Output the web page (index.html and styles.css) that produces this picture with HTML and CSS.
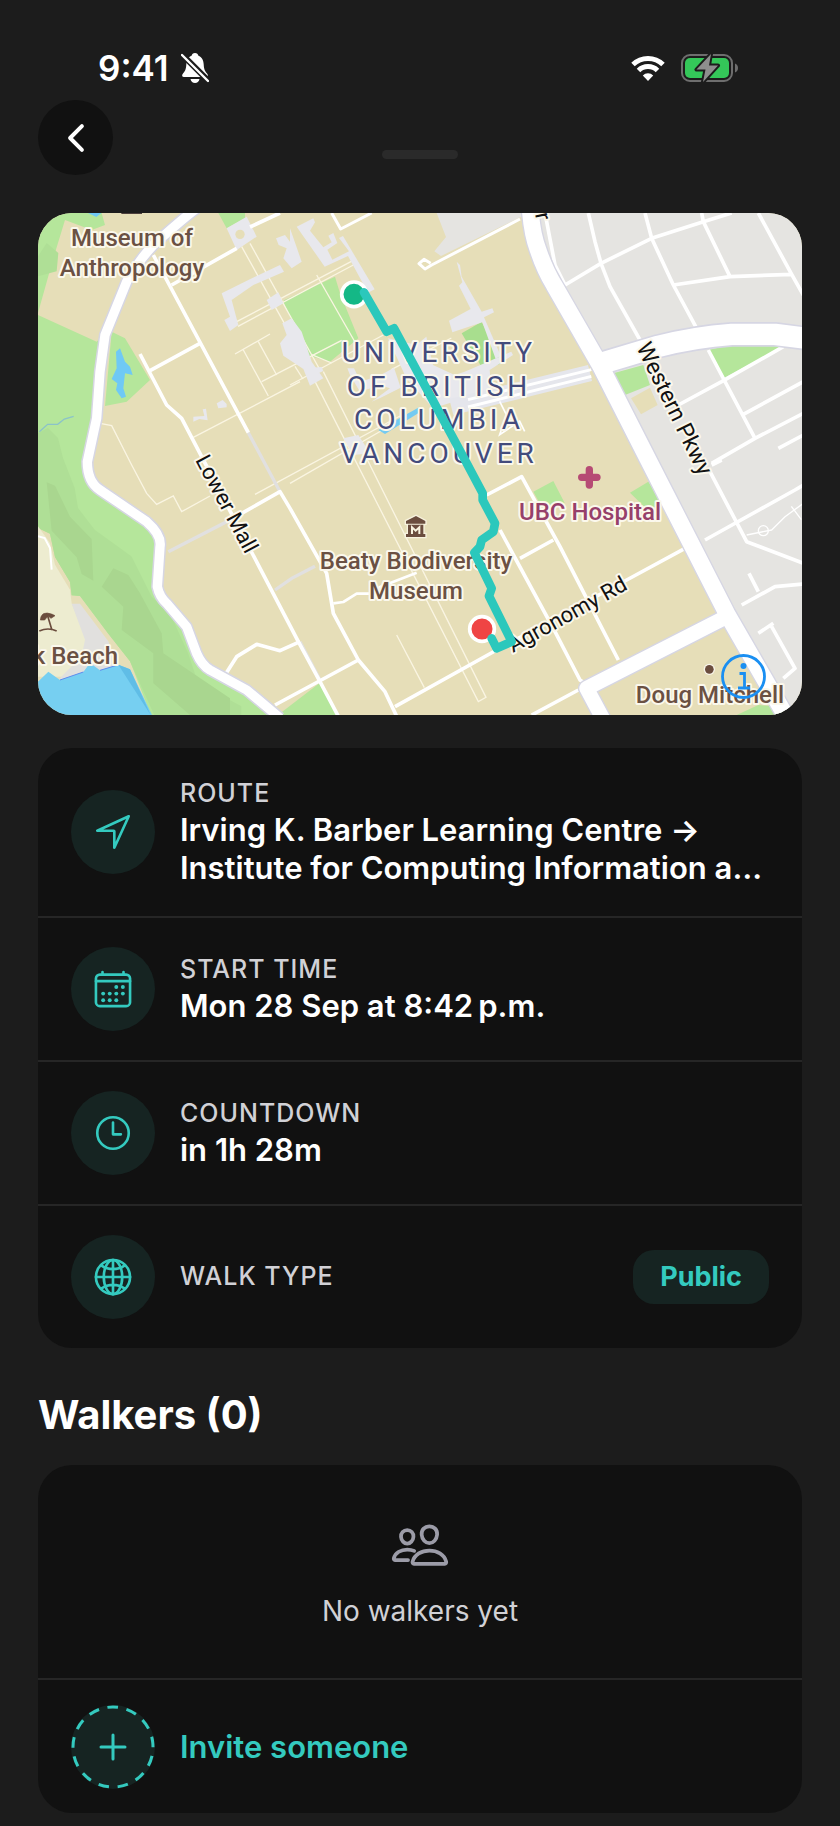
FILE: index.html
```html
<!DOCTYPE html>
<html lang="en">
<head>
<meta charset="UTF-8" />
<meta name="viewport" content="width=device-width, initial-scale=1" />
<title>Walk details</title>
<link rel="stylesheet" href="styles.css">
</head>
<body>

<div class="status-bar">
  <div class="status-left">
    <span class="time">9:41</span>
    <svg class="bell" viewBox="0 0 28 30">
      <path d="M14 0c2 0 3 1 3.200 2.500C21 4 22.500 7.500 22.700 11.500c.2 5 1.500 7 3.300 9 1.500 1.800 1 3.500-1 3.500H3c-2 0-2.500-1.700-1-3.500 1.800-2 3.100-4 3.300-9C5.500 7.500 7 4 10.800 2.500 11 1 12 0 14 0z" fill="#fff"/>
      <path d="M9.500 26h9c-.5 2.500-2.200 4-4.500 4s-4-1.500-4.500-4z" fill="#fff"/>
      <path d="M1 1.500l26 26" stroke="#1c1c1c" stroke-width="6"/>
      <path d="M1 2l26 26" stroke="#fff" stroke-width="2.400" stroke-linecap="round"/>
    </svg>
  </div>
  <div class="status-right">
    <svg class="wifi" viewBox="0 0 34 26">
      <path d="M2 9.500a21.500 21.500 0 0 1 30 0M7.500 15.500a13.500 13.500 0 0 1 19 0" fill="none" stroke="#fff" stroke-width="5"/>
      <path d="M17 26l-5.200-5.600a7.400 7.400 0 0 1 10.400 0z" fill="#fff"/>
    </svg>
    <svg class="battery" viewBox="0 0 57 28">
      <rect x="1" y="1" width="50" height="26" rx="8" fill="none" stroke="#6e6e6e" stroke-width="2"/>
      <path d="M54 9.500c4 1.500 4 7.500 0 9z" fill="#6e6e6e"/>
      <rect x="4" y="4" width="44" height="20" rx="5" fill="#34c759"/>
      <path d="M30 0L15.500 15.500h9L22 28l15-16.500h-9z" fill="#8e8e8e" stroke="#1c1c1c" stroke-width="4" stroke-linejoin="round" paint-order="stroke"/>
    </svg>
  </div>
</div>

<header class="header">
  <button class="back" type="button" aria-label="Back">
    <svg class="icon" viewBox="0 0 512 512"><path d="M328 112L184 256l144 144" stroke-width="48"/></svg>
  </button>
  <span class="grabber"></span>
</header>

<main>
  <section class="map">
    <svg class="map-svg" viewBox="0 0 764 502">
      <!-- terrain and roads, drawn on a grid three times finer than the labels -->
      <svg width="764" height="502" viewBox="0 0 2292 1506">
        <rect width="2292" height="1506" fill="#e6deb8"/>
        <path fill="#e5e4e1" d="M1194-5l30 77-35 43 20 14 245-120 24-14h850v1525h-60L1686 456l-110-186-80-150-18-120z"/>

        <!-- woods on the west side -->
        <g fill="#b5e69b">
          <path d="M0 0h191l10 36-40 15-80-30-35 115L0 300z"/>
          <path d="M0 306l176 80 20-20-20 250-28 150 38 65 140 95 40 55-8 140 88 120 30 80 40 50 110 60 94 79H340L276 1345l-65-83-85-113-25-2-5-40-45-75-15-70L0 945z"/>
          <path d="M221 356l40 20 75 125-70 65-65 13z"/>
          <path d="M541 0h80v16l-55 30z"/>
          <path d="M720 1506l126-97 55 97z"/>
          <path d="M1486 836l60-32 34 66-70 10zM1776 839l55-33 45 70-50 12z"/>
          <path d="M2096 1506l65-30 60 5 30 25z"/>
        </g>
        <g fill="#afdf96">
          <path d="M0 130l26-40 35 30-5 55L0 190z"/>
          <path d="M0 660l30-15 30 30 15 60 35 90 10 60 50 65 110 80 60 120 60 60 50 110 30 90 130 70 0 51H360L276 1345l-65-83-85-113-25-2-5-40-45-75-15-70L0 945z"/>
        </g>
        <g fill="#a9d68f">
          <path d="M26 808l25 10 45 93 65 67 5 125-35-20-15-50-75-80z"/>
          <path d="M226 1066l45 20 35 55 65 120 5 60 200 135v50H456L346 1411v-90l-95-70 5-70-65-60z"/>
        </g>
        <path fill="#edecd0" d="M0 940l36 50 15 65 45 75 5 41 40 100v120H0z"/>
        <path fill="#e1e0de" d="M101 1172h25l85 113 25 73-45 20-40-10-50 30-40 2 70-70 10-50z"/>
        <path d="M0 970l20 5 16 30 5 65" fill="none" stroke="#fff" stroke-width="6"/>
        <path fill="#76cff1" d="M0 1406l31-30 35 25 70-24 20-27 30 22 55-17 35 14 66 137H0z"/>
        <path fill="#60bde6" d="M241 1355l35 14 62 137-45-70z"/>
        <path d="M66 1401l70-24M186 1372l50-15" stroke="#5d8bee" stroke-width="3"/>
        <path fill="#6fc9f5" d="M246 406l15 40 15 15 8 25-23-5-5 45 8 25-13 5-17-25 4-20-17-13 15-32-2-50zM150 0h40l-15 12z"/>
        <path d="M4 656l25-22h30l20-16 28-8" fill="none" stroke="#8bc3c9" stroke-width="4"/>

        <!-- campus lawns -->
        <path fill="#b5e69b" d="M738 262l153-71 15 50 55 135-85 70-70-20-68-155z"/>
        <path fill="#a8de8e" d="M1271 361l60-35 60 125-55 20z"/>
        <path fill="#b5e69b" d="M2011 411l90-20 135 10-180 95zM1726 481l90-25 20 60-75 30z"/>
        <path fill="#e6deb8" d="M1779 556l57-32 23 52-50 28z"/>

        <!-- footpaths -->
        <g fill="none" stroke="#faf5e2" stroke-width="4">
          <path d="M186 631l35 7 60 118 45 85 30 33 50-25 25 47 85-47"/>
          <path d="M466 673l320-167M616 411l75 138M591 423l105-60M661 386l55 100M671 506l240-124"/>
          <path d="M611 101l220 395M636 91l210 380M596 326l350-184M600 340l346-184M836 186l120 210"/>
          <path d="M816 476l505 990 23-13L856 476M1076 1266l83 158"/>
          <path d="M651 844l435-235M756 811l330-190M756 516l280-150M1060 470l180-95"/>
          <path d="M821 425l60 25M771 460l24 38"/>
        </g>

        <!-- buildings -->
        <g fill="#e8e8ed">
          <path d="M566 46l60-35 30 60-60 40z"/>
          <path d="M551 241l80-40 95-45 12 20-92 40-65 45 20 75-25 18-17-33 17-10z"/>
          <path d="M686 261l35-23 15 33-35 20z"/>
          <path d="M726 391l20-25-13-35 28-15 30 40 30 90 35 50-40 22-20-50-60-40z"/>
          <path d="M714 76l27-10 15 20 0-40 35 100-30 20-25-30 10-30-24-10z"/>
          <path d="M776 41l50-25 5 12-15 25 40 50 25-15-10-20 15-8 12 30-30 20 15 30 50-25-30-40 12-6 95 160-20 10-60-110-70 32z"/>
          <path d="M1256 146l10 10 5 35 60 105 32-10 5 12-30 15 50 115-15 10-40-110-90 30-10-35 65-35-35-70 10-10z"/>
          <path d="M1050 376l85 20 30-25 20 85 65 30 30-10 140-60 5 10-70 45 5 60-175 55-80-90z"/>
          <path d="M1001 566l55-40-30-10-60 20-30-50-8-20 20 0 20 40 60-20 40-22 20 60-60 30z"/>
          <path d="M801 466l50-4 5 12-40 18zM916 676l45-10 35 55-50 5z"/>
          <path d="M536 571l18-10 12 12v10l-25 3zM466 611l33-2-5-20 10-2 5 35-25-4-18 8z"/>
        </g>
        <circle cx="606" cy="64" r="14" fill="#e6deb8"/>
        <path d="M1021 651l125-70 10 10-115 72z" fill="#74caf2"/>

        <!-- service roads -->
        <g fill="none" stroke="#e1e0e0" stroke-width="10">
          <path d="M631 659l95 177M391 1016l185-95M711 1131l50-35 70-36M786 1286l60 115"/>
        </g>
        <path d="M1240 582L1656 480" stroke="#e5e6ec" stroke-width="50"/>
        <path d="M1290 560L1660 470M1290 582L1660 490" stroke="#fff" stroke-width="9"/>
        <path d="M1385 565l20 40-20 60 60-40 15 30" fill="none" stroke="#fff" stroke-width="5"/>

        <!-- campus streets -->
        <g fill="none" stroke="#fff" stroke-width="11" stroke-linejoin="round">
          <path d="M346 126l285 533M401 216l195-110M636 42l90-42"/>
          <path d="M306 423l80 153 45 40 350 670 65 120 55 104M336 473l150-82"/>
          <path d="M576 921l150-85 30 50 110 195 20 120 75 140 80 95 35 74"/>
          <path d="M561 1386l35-55 60-37 70 19 60-27M711 1476l250-135"/>
          <path d="M886 1171l30-4 40-25h40l30-20 110-43" stroke-width="8"/>
          <path d="M1071 1481l305-170 390-210 175-95"/>
          <path d="M1346 846l105-55 115 210 175 340M1386 951l165 305 75 145 30 20M1446 1036l100-55M1481 1506l140-75"/>
          <path d="M881 0l27 48 93-48M1446 18l-265 138-20 12-18-16 15-13 20 12" stroke-width="9"/>
        </g>

        <!-- residential streets -->
        <g fill="none" stroke="#fff" stroke-width="11" stroke-linejoin="round">
          <path d="M1651 0l20 86 18 65 27 70 90 160M1581 216l108-65 152-75 155-50 85-26"/>
          <path d="M1821 0l20 76 65 140 70 130M1991 0l5 26 80 165M1906 216l170-25 185-7M2161 0l100 184 35 62"/>
          <path d="M2011 411l140 265M2236 401l-185 105-130 70M2116 604l180-98M2021 751l130-75 145-75M2221 706l75-40"/>
          <path d="M1521 0l30 156 30 60M2016 776l110 210 170 65M2001 981l270-150 25-15"/>
          <path d="M2111 1176l100-55 85-8M2133 1081l28 55M2161 1261l45-30M2201 1241l70 125-35 30M2021 756l30-15"/>
          <path d="M2126 966l75-15 40-40 55-40M2260 880l30 40" stroke-width="4"/>
          <circle cx="2176" cy="953" r="15" stroke-width="4"/>
        </g>

        <!-- main roads: casing below, surface above -->
        <g fill="none" stroke="#d6d6e3" stroke-linejoin="round">
          <path d="M476-14Q440 12 346 96 296 150 266 206L201 366l-15 110-10 140-28 130q0 60 38 85l140 95q46 40 40 75l-8 120q6 30 28 50l60 70 30 80q15 35 40 50l110 60 100 84" stroke-width="37"/>
          <path d="M1476-20q5 80 24 130 20 60 48 106l138 240 145 285 235 460 190 330" stroke-width="58"/>
          <path d="M1686 452l175-52q110-28 220-36h130l100 13" stroke-width="74"/>
          <path d="M2066 1211l-420 215 64 120" stroke-width="52"/>
        </g>
        <g fill="none" stroke="#fff" stroke-linejoin="round">
          <path d="M476-14Q440 12 346 96 296 150 266 206L201 366l-15 110-10 140-28 130q0 60 38 85l140 95q46 40 40 75l-8 120q6 30 28 50l60 70 30 80q15 35 40 50l110 60 100 84" stroke-width="28"/>
          <path d="M1686 452l175-52q110-28 220-36h130l100 13" stroke-width="64"/>
          <path d="M2066 1211l-420 215 64 120" stroke-width="44"/>
          <path d="M1476-20q5 80 24 130 20 60 48 106l138 240 145 285 235 460 190 330" stroke-width="50"/>
        </g>

        <!-- place symbols -->
        <path d="M1654 770v46M1631 793h46" stroke="#b64b74" stroke-width="22" stroke-linecap="round"/>
        <circle cx="2014" cy="1369" r="17" fill="#fff" opacity=".7"/>
        <circle cx="2014" cy="1369" r="13" fill="#6b4d3e"/>
        <path d="M250 0h62v3h-62z" fill="#4d403c"/>
        <g fill="#6b4d3e" stroke="#f7f2de" stroke-width="8" paint-order="stroke">
          <path d="M1104 924l30-15 28 15v8h-58zM1110 935h46v28h6v9h-58v-9h6z"/>
        </g>
        <path d="M1122 963v-20l11 10 11-10v20" fill="none" stroke="#f7f2de" stroke-width="6"/>
        <g fill="none" stroke="#6b4d3e" stroke-width="5">
          <path d="M28 1205l14 47M4 1254q26-12 52 0"/>
          <path d="M7 1221q2-30 36-17l8 4-12 8-9-7-10 12z" fill="#6b4d3e" stroke-width="2"/>
        </g>
      </svg>

      <g class="place">
        <text x="94" y="33">Museum of</text>
        <text x="94" y="63">Anthropology</text>
        <text x="378" y="356">Beaty Biodiversity</text>
        <text x="378" y="386">Museum</text>
        <text x="672" y="490">Doug Mitchell</text>
        <text class="to-edge" x="80" y="451">k Beach</text>
        <text class="hospital" x="552" y="307">UBC Hospital</text>
      </g>
      <g class="district">
        <text x="401" y="149">UNIVERSITY</text>
        <text x="401" y="183">OF BRITISH</text>
        <text x="401" y="216">COLUMBIA</text>
        <text x="401" y="250">VANCOUVER</text>
      </g>
      <g class="street">
        <text transform="translate(157 247) rotate(62)">Lower Mall</text>
        <text class="long" transform="translate(598 134) rotate(64)">Western Pkwy</text>
        <text transform="translate(475 440) rotate(-29)">Agronomy Rd</text>
        <text transform="translate(497 1) rotate(78)">r</text>
      </g>

      <!-- walking route with its two ends -->
      <svg width="764" height="502" viewBox="0 0 2292 1506">
        <circle cx="948" cy="244" r="37" fill="#14b886" stroke="#fff" stroke-width="11"/>
        <circle cx="1332" cy="1248" r="37" fill="#ef4444" stroke="#fff" stroke-width="11"/>
        <path d="M978 238l68 118 22-10 213 395 53 100v20l37 70-5 25-35 25-5 20-17 18 52 107-8 23 68 137-45 20-15-30" fill="none" stroke="#2bc8bc" stroke-width="26" stroke-linecap="round" stroke-linejoin="round"/>
      </svg>
    </svg>
    <button class="map-info" type="button" aria-label="Map information">
      <svg viewBox="0 0 45 45" fill="none" stroke="#1a8ff2" stroke-width="2.800">
        <circle cx="22.500" cy="22.500" r="21"/>
        <path d="M18.500 19.500h5v14M17 34h12"/>
        <circle cx="22.500" cy="12" r="3" fill="#1a8ff2" stroke="none"/>
      </svg>
    </button>
  </section>

  <section class="card">
    <div class="row">
      <span class="badge">
        <svg class="icon" viewBox="0 0 512 512"><path d="M448 64L64 240.140h200a8 8 0 0 1 8 8V448z"/></svg>
      </span>
      <div class="info">
        <div class="label">ROUTE</div>
        <div class="value">Irving K. Barber Learning Centre →<br>Institute for Computing Information a…</div>
      </div>
    </div>
    <div class="row">
      <span class="badge">
        <svg class="icon" viewBox="0 0 512 512">
          <rect x="48" y="80" width="416" height="384" rx="48"/>
          <path d="M128 48v32M384 48v32M464 160H48"/>
          <g fill="currentColor" stroke="none">
            <circle cx="296" cy="232" r="24"/><circle cx="376" cy="232" r="24"/>
            <circle cx="136" cy="312" r="24"/><circle cx="216" cy="312" r="24"/><circle cx="296" cy="312" r="24"/><circle cx="376" cy="312" r="24"/>
            <circle cx="136" cy="392" r="24"/><circle cx="216" cy="392" r="24"/><circle cx="296" cy="392" r="24"/>
          </g>
        </svg>
      </span>
      <div class="info">
        <div class="label">START TIME</div>
        <div class="value">Mon 28 Sep at 8:42&#8239;p.m.</div>
      </div>
    </div>
    <div class="row">
      <span class="badge">
        <svg class="icon" viewBox="0 0 512 512"><circle cx="256" cy="256" r="192"/><path d="M256 128v144h96"/></svg>
      </span>
      <div class="info">
        <div class="label">COUNTDOWN</div>
        <div class="value">in 1h 28m</div>
      </div>
    </div>
    <div class="row">
      <span class="badge">
        <svg class="icon" viewBox="0 0 512 512">
          <circle cx="256" cy="256" r="208"/>
          <path d="M256 48c-58.070 0-112.670 93.130-112.670 208S197.930 464 256 464s112.670-93.130 112.670-208S314.070 48 256 48z"/>
          <path d="M117.330 117.330c38.240 27.150 86.380 43.340 138.670 43.340s100.430-16.190 138.670-43.340M394.670 394.670c-38.240-27.150-86.380-43.340-138.670-43.340s-100.430 16.190-138.670 43.340M256 48v416M464 256H48"/>
        </svg>
      </span>
      <div class="info">
        <div class="label">WALK TYPE</div>
      </div>
      <span class="pill">Public</span>
    </div>
  </section>

  <h2>Walkers (0)</h2>

  <section class="card">
    <div class="empty">
      <svg class="icon people" viewBox="0 0 512 512">
        <path d="M402 168c-2.930 40.670-33.100 72-66 72s-63.120-31.320-66-72c-3-42.310 26.370-72 66-72s69 30.460 66 72z"/>
        <path d="M336 304c-65.170 0-127.840 32.370-143.540 95.410-2.080 8.340 3.150 16.590 11.720 16.590h263.650c8.570 0 13.770-8.250 11.720-16.590C463.850 335.360 401.180 304 336 304z"/>
        <path d="M200 185.940c-2.340 32.480-26.720 58.060-53 58.060s-50.700-25.570-53-58.060C91.610 152.150 115.340 128 147 128s55.390 24.770 53 57.940z"/>
        <path d="M206 306c-18.050-8.270-37.930-11.450-59-11.450-52 0-102.100 25.850-114.650 76.200-1.650 6.660 2.530 13.250 9.370 13.250H154"/>
      </svg>
      <p>No walkers yet</p>
    </div>
    <button class="invite" type="button">
      <svg class="invite-icon" viewBox="0 0 84 84">
        <circle cx="42" cy="42" r="42" fill="#162422"/>
        <g fill="none" stroke="currentColor" stroke-width="3">
          <circle cx="42" cy="42" r="40" pathLength="260" stroke-dasharray="11 9" transform="rotate(-98 42 42)"/>
          <path d="M42 30v24M30 42h24" stroke-linecap="round"/>
        </g>
      </svg>
      Invite someone
    </button>
  </section>
</main>

</body>
</html>
```
FILE: styles.css
```css
* {
  box-sizing: border-box;
}
body {
  background-color: #1c1c1c;
  color: #fff;
  font-family: Inter, "Liberation Sans", sans-serif;
  margin: 0;
  padding: 48px 38px 13px;
}
button {
  font: inherit;
  border: 0;
  padding: 0;
  background: none;
  cursor: pointer;
}
svg {
  display: block;
}
.status-bar {
  display: flex;
  justify-content: space-between;
  align-items: center;
  height: 40px;
  padding: 0 64px 0 60px;
}
.status-left, .status-right {
  display: flex;
  align-items: center;
  gap: 12px;
}
.status-right {
  gap: 16px;
}
.time {
  font-size: 35px;
  font-weight: 600;
}
.bell {
  width: 28px;
  height: 30px;
}
.wifi {
  width: 34px;
  height: 26px;
}
.battery {
  width: 57px;
  height: 28px;
}
.header {
  display: grid;
  grid-template-columns: 1fr auto 1fr;
  align-items: end;
  margin: 12px 0 38px;
}
.back {
  display: flex;
  justify-content: center;
  align-items: center;
  width: 75px;
  height: 75px;
  border-radius: 50%;
  background-color: #111;
  color: #fff;
}
.grabber {
  width: 76px;
  height: 9px;
  margin-bottom: 16px;
  border-radius: 5px;
  background-color: #2a2a2a;
}
.icon {
  width: 42px;
  height: 42px;
  fill: none;
  stroke: currentColor;
  stroke-width: 32px;
  stroke-linecap: round;
  stroke-linejoin: round;
}
.back .icon {
  stroke-width: 48px;
}

/* map */
.map {
  position: relative;
  overflow: hidden;
  border-radius: 34px;
  margin-bottom: 33px;
}
.map-svg {
  width: 100%;
  height: auto;
}
.map text {
  font-family: Roboto, "Liberation Sans", sans-serif;
  paint-order: stroke;
  stroke: #fbf8ec;
  stroke-width: 4px;
  stroke-linejoin: round;
}
.place text {
  font-size: 24px;
  font-weight: 500;
  fill: #6b5143;
  text-anchor: middle;
}
.place .to-edge {
  text-anchor: end;
}
.place .hospital {
  fill: #96406a;
}
.district text {
  font-size: 28px;
  letter-spacing: 4px;
  fill: #434b7c;
  text-anchor: middle;
}
.street text {
  font-size: 22px;
  fill: #111;
}
.street .long {
  font-size: 23px;
}
.map-info {
  position: absolute;
  right: 36px;
  bottom: 16px;
  width: 45px;
  height: 45px;
}

/* cards */
.card {
  background-color: #111;
  border-radius: 34px;
  overflow: hidden;
}
.row {
  display: flex;
  align-items: center;
  gap: 25px;
  padding: 29px 33px;
}
.row + .row, .invite {
  border-top: 2px solid #262626;
}
.badge {
  display: flex;
  flex: none;
  justify-content: center;
  align-items: center;
  width: 84px;
  height: 84px;
  border-radius: 50%;
  background-color: #162422;
  color: #34cabf;
}
.info {
  flex: 1;
  min-width: 0;
}
.label {
  margin-bottom: 2px;
  font-size: 25px;
  font-weight: 500;
  line-height: 32px;
  letter-spacing: 1px;
  color: #d1d1d6;
}
.value {
  font-size: 31px;
  font-weight: 600;
  line-height: 38px;
  white-space: nowrap;
  overflow: hidden;
  text-overflow: ellipsis;
}
.pill {
  padding: 0 27px;
  border-radius: 21px;
  background-color: #162422;
  color: #34cabf;
  font-size: 27px;
  font-weight: 700;
  line-height: 54px;
}
h2 {
  margin: 43px 0 26px;
  font-size: 40px;
  font-weight: 700;
  line-height: 48px;
}
.empty {
  display: flex;
  flex-direction: column;
  align-items: center;
  gap: 18px;
  padding: 50px 33px 48px;
}
.people {
  width: 60px;
  height: 60px;
  color: #9c9ca8;
}
.empty p {
  margin: 0;
  font-size: 28px;
  line-height: 37px;
  color: #d1d1d6;
}
.invite {
  display: flex;
  align-items: center;
  gap: 25px;
  width: 100%;
  padding: 25px 33px 24px;
  color: #34cabf;
  font-size: 31px;
  font-weight: 600;
  line-height: 38px;
}
.invite-icon {
  width: 84px;
  height: 84px;
}
```
